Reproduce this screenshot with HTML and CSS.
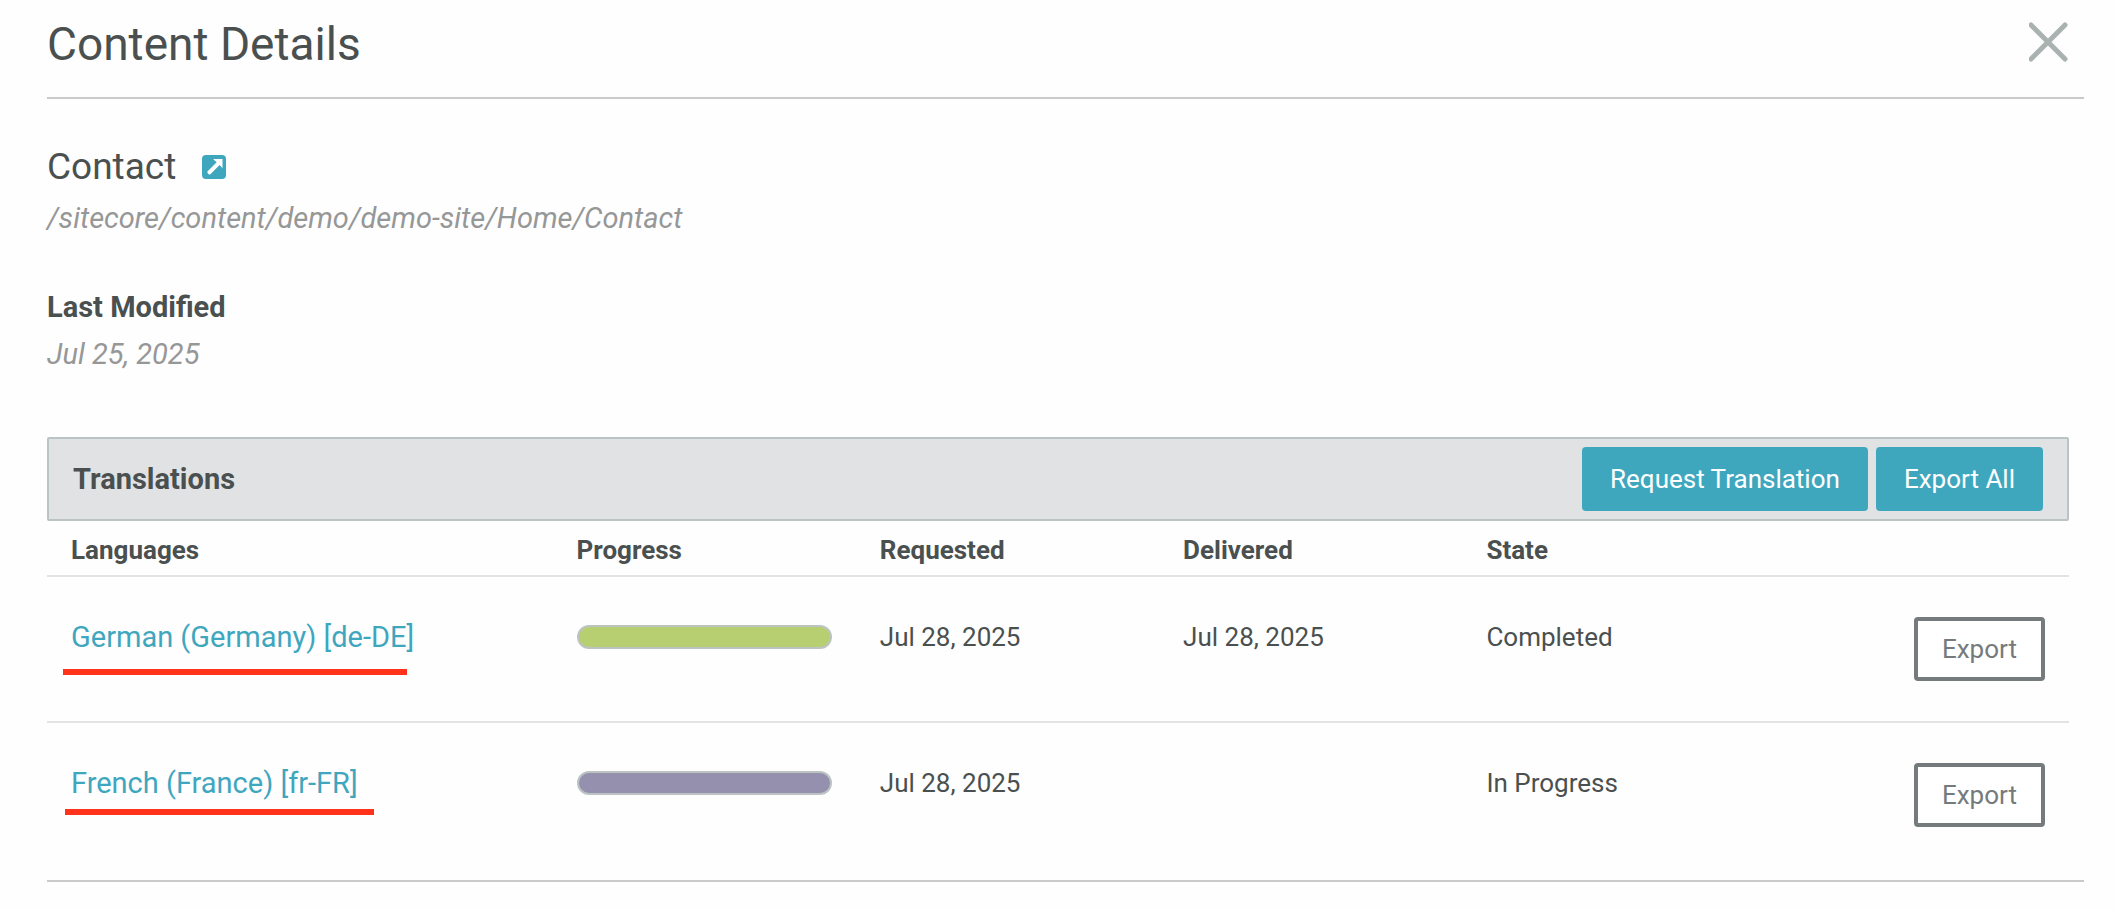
FILE: index.html
```html
<!DOCTYPE html>
<html lang="en">
<head>
<meta charset="utf-8">
<title>Content Details</title>
<link rel="stylesheet" href="styles.css">
</head>
<body>
<main class="dialog">
  <header class="dialog-header">
    <h1 class="dialog-title">Content Details</h1>
    <button class="close" type="button" aria-label="Close">
      <svg viewBox="0 0 40 40" width="40" height="40" aria-hidden="true"><path d="M2 3 36 37M36 3 2 37" fill="none" stroke="#aab2b1" stroke-width="5" stroke-linecap="round"/></svg>
    </button>
  </header>
  <div class="dialog-body">
    <section class="item">
      <div class="item-heading">
        <h2 class="item-name">Contact</h2>
        <a class="open-link" href="#" aria-label="Open item">
          <svg viewBox="0 0 24 24" width="24" height="24" aria-hidden="true"><rect width="24" height="24" rx="4" fill="#3ea7be"/><path d="M11.500 4h9v9.200l-2.900-3.100-9.200 9.200q-1 .6-1.900-.3l-.9-.9q-.7-1 .1-1.800l9-9-3.200-2.700z" fill="#fff"/></svg>
        </a>
      </div>
      <p class="meta">/sitecore/content/demo/demo-site/Home/Contact</p>
      <h3 class="label">Last Modified</h3>
      <p class="meta">Jul 25, 2025</p>
    </section>
    <section class="translations">
      <div class="toolbar">
        <h3 class="toolbar-title">Translations</h3>
        <div class="toolbar-actions">
          <button class="btn btn-primary" type="button">Request Translation</button>
          <button class="btn btn-primary" type="button">Export All</button>
        </div>
      </div>
      <table class="grid">
        <colgroup>
          <col class="col-language"><col class="col-data"><col class="col-data"><col class="col-data"><col class="col-state">
          <col class="col-action">
        </colgroup>
        <thead>
          <tr><th scope="col">Languages</th><th scope="col">Progress</th><th scope="col">Requested</th><th scope="col">Delivered</th><th scope="col">State</th><td></td></tr>
        </thead>
        <tbody>
          <tr>
            <td><a class="language mark-wide" href="#">German (Germany) [de-DE]</a></td>
            <td><div class="progress completed" role="progressbar" aria-label="German progress" aria-valuenow="100"></div></td>
            <td>Jul 28, 2025</td>
            <td>Jul 28, 2025</td>
            <td>Completed</td>
            <td class="action"><button class="btn btn-outline" type="button">Export</button></td>
          </tr>
          <tr>
            <td><a class="language mark-narrow" href="#">French (France) [fr-FR]</a></td>
            <td><div class="progress in-progress" role="progressbar" aria-label="French progress" aria-valuenow="100"></div></td>
            <td>Jul 28, 2025</td>
            <td></td>
            <td>In Progress</td>
            <td class="action"><button class="btn btn-outline" type="button">Export</button></td>
          </tr>
        </tbody>
      </table>
    </section>
  </div>
</main>
</body>
</html>
```
FILE: styles.css
```css
* {
  box-sizing: border-box;
}

body {
  margin: 0;
  background: #fefefe;
  color: #4a504f;
  font-family: Roboto, "Liberation Sans", sans-serif;
  font-size: 26px;
  line-height: 40px;
}

h1, h2, h3, p {
  margin: 0;
}

button {
  font: inherit;
  cursor: pointer;
}

svg {
  display: block;
}

.dialog {
  margin: 0 31px 0 47px;
}

.dialog-header {
  display: flex;
  justify-content: space-between;
  align-items: flex-start;
  padding: 15px 15px 24px 0;
  border-bottom: 2px solid #c9cacb;
}

.dialog-title {
  font-size: 46px;
  font-weight: 400;
  line-height: 58px;
}

.close {
  margin-top: 7px;
  padding: 0;
  border: 0;
  background: none;
}

.dialog-body {
  padding: 42px 15px 13px 0;
  border-bottom: 2px solid #c9cacb;
}

.item-heading {
  display: flex;
  align-items: center;
  gap: 26px;
}

.item-name {
  font-size: 37px;
  font-weight: 400;
  line-height: 52px;
}

.meta {
  color: #969797;
  font-size: 29px;
  font-style: italic;
  line-height: 50px;
}

.label {
  margin-top: 43px;
  font-size: 29px;
  font-weight: 700;
  line-height: 43px;
}

.translations {
  margin-top: 58px;
}

.toolbar {
  display: flex;
  justify-content: space-between;
  align-items: center;
  padding: 8px 24px;
  border: 2px solid #bcc3c3;
  border-radius: 2px;
  background: #e1e2e4;
}

.toolbar-title {
  font-size: 29px;
  font-weight: 700;
}

.toolbar-actions {
  display: flex;
  gap: 8px;
}

.btn {
  height: 64px;
  padding: 0 28px;
  border: 0;
  border-radius: 4px;
}

.btn-primary {
  background: #3ea7be;
  color: #fff;
}

.btn-outline {
  padding: 0 24px;
  border: 4px solid #757b7d;
  background: #fff;
  color: #757b7d;
}

.grid {
  width: 100%;
  border-collapse: separate;
  border-spacing: 0;
  table-layout: fixed;
}

.col-language {
  width: 25%;
}

.col-data,
.col-state,
.col-action {
  width: 15%;
}

.grid th {
  padding: 9px 24px 5px;
  border-bottom: 2px solid #e2e3e3;
  font-weight: 700;
  text-align: left;
}

.grid td {
  padding: 40px 24px;
  vertical-align: top;
}

.grid thead td {
  padding: 0;
  border-bottom: 2px solid #e2e3e3;
}

.grid tbody tr:first-child td {
  border-bottom: 2px solid #e2e3e3;
}

.grid .action {
  line-height: 0;
  text-align: right;
}

.language {
  position: relative;
  color: #3ea7be;
  font-size: 29px;
  text-decoration: none;
}

.language::after {
  content: "";
  position: absolute;
  height: 6px;
  background: #ff321c;
}

.mark-wide::after {
  top: 49px;
  left: -8px;
  width: 344px;
}

.mark-narrow::after {
  top: 43px;
  left: -6px;
  width: 309px;
}

.progress {
  height: 24px;
  margin-top: 8px;
  border: 2px solid #bcc3c3;
  border-radius: 12px;
}

.completed {
  background: #b7cf71;
}

.in-progress {
  background: #9690af;
}
```
